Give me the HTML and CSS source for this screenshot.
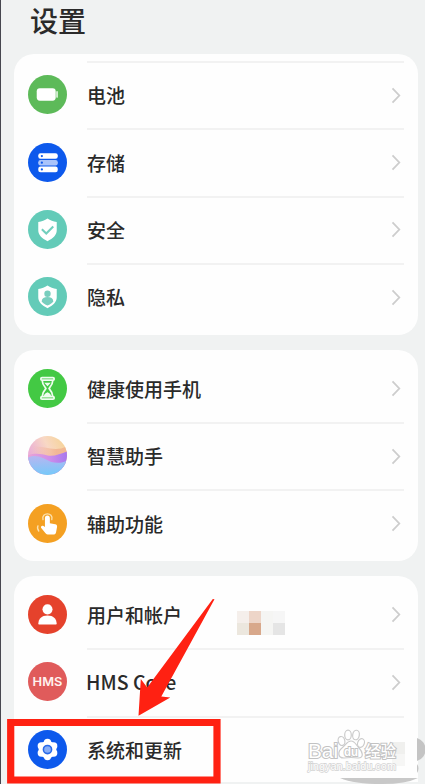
FILE: index.html
```html
<!DOCTYPE html>
<html lang="zh-CN">
<head>
<meta charset="utf-8">
<title>设置</title>
<link rel="stylesheet" href="styles.css">
</head>
<body>
<main class="screen">
  <h1 class="title">设置</h1>

  <section class="card card-first">
    <div class="row">
      <svg class="icon" viewBox="0 0 38 38"><circle cx="19" cy="19" r="19" fill="#5dba59"/><rect x="8.5" y="13" width="18.5" height="12" rx="3" fill="#fff"/><path d="M28.3 16.5v5" stroke="#e3f5e2" stroke-width="1.6" stroke-linecap="round"/></svg>
      <div class="body"><span class="label">电池</span><svg class="chevron" viewBox="0 0 10 17"><path d="M1.5 1.3 8.3 8.5 1.5 15.7"/></svg></div>
    </div>
    <div class="row">
      <svg class="icon" viewBox="0 0 38 38"><circle cx="19" cy="19" r="19" fill="#0d59ec"/><rect x="10" y="10" width="19" height="5.4" rx="2.2" fill="#fff"/><rect x="10" y="16.5" width="19" height="5.4" rx="2.2" fill="#a9c3fa"/><rect x="10" y="23" width="19" height="5.4" rx="2.2" fill="#fff"/><g fill="#0d59ec"><circle cx="13.5" cy="12.7" r="1.1"/><circle cx="13.5" cy="19.2" r="1.1"/><circle cx="13.5" cy="25.7" r="1.1"/></g></svg>
      <div class="body"><span class="label">存储</span><svg class="chevron" viewBox="0 0 10 17"><path d="M1.5 1.3 8.3 8.5 1.5 15.7"/></svg></div>
    </div>
    <div class="row">
      <svg class="icon" viewBox="0 0 38 38"><circle cx="19" cy="19" r="19" fill="#63cbb8"/><path d="M19 8.2c2.8 2 5.4 3 9 3.4v8.2c0 4.7-3.5 8-9 10.600-5.500-2.600-9-5.900-9-10.600v-8.200c3.600-.4 6.200-1.400 9-3.400z" fill="#fff"/><path d="m13.500 18.700 4.300 4.200 6.800-6.900" fill="none" stroke="#72cfbd" stroke-width="2"/></svg>
      <div class="body"><span class="label">安全</span><svg class="chevron" viewBox="0 0 10 17"><path d="M1.500 1.300 8.300 8.500 1.500 15.700"/></svg></div>
    </div>
    <div class="row">
      <svg class="icon" viewBox="0 0 38 38"><circle cx="19" cy="19" r="19" fill="#63cbb8"/><path d="M19 8.200c2.800 2 5.400 3 9 3.400v8.200c0 4.700-3.500 8-9 10.600-5.500-2.600-9-5.900-9-10.600v-8.200c3.600-.4 6.200-1.400 9-3.400z" fill="#fff"/><circle cx="19" cy="16.300" r="3.100" fill="#78cebe"/><path d="M13.300 23.800c.3-3 2.400-4.200 5.700-4.200s5.400 1.200 5.700 4.200c-1.400 1.600-3.200 2.800-5.700 4-2.500-1.200-4.300-2.400-5.700-4z" fill="#78cebe"/></svg>
      <div class="body"><span class="label">隐私</span><svg class="chevron" viewBox="0 0 10 17"><path d="M1.500 1.300 8.300 8.500 1.500 15.700"/></svg></div>
    </div>
  </section>

  <section class="card">
    <div class="row">
      <svg class="icon" viewBox="0 0 38 38"><circle cx="19" cy="19" r="19" fill="#43c944"/><g fill="none" stroke="#effcef" stroke-width="1.700" stroke-linejoin="round"><rect x="12.500" y="8.500" width="13" height="2.400" rx="1.200"/><rect x="12.500" y="27" width="13" height="2.400" rx="1.200"/><path d="M13.800 11c0 4 1.500 5.500 3.700 8-2.200 2.500-3.700 4-3.700 8M24.200 11c0 4-1.500 5.500-3.700 8 2.200 2.500 3.700 4 3.700 8"/></g><path d="M15.800 13.500h6.400L19 16.800zM15.500 26.500c.3-2 1.500-3 3.500-3.800 2 .8 3.200 1.800 3.500 3.800z" fill="#effcef"/></svg>
      <div class="body"><span class="label">健康使用手机</span><svg class="chevron" viewBox="0 0 10 17"><path d="M1.500 1.300 8.300 8.500 1.500 15.700"/></svg></div>
    </div>
    <div class="row">
      <svg class="icon" viewBox="0 0 38 38">
        <defs>
          <clipPath id="orb"><circle cx="19" cy="19" r="19"/></clipPath>
          <linearGradient id="sky" x1="0" y1=".5" x2="1" y2="0"><stop offset="0" stop-color="#e9aad8"/><stop offset=".5" stop-color="#f8d8c4"/><stop offset="1" stop-color="#f5d28c"/></linearGradient>
          <linearGradient id="glow" x1="0" x2="1"><stop offset="0" stop-color="#f1b69b" stop-opacity="0"/><stop offset=".7" stop-color="#f1b08e" stop-opacity=".8"/></linearGradient>
          <linearGradient id="violet" x1="0" x2="1"><stop offset="0" stop-color="#eba3d4"/><stop offset=".55" stop-color="#ce8eea"/><stop offset="1" stop-color="#a878ed"/></linearGradient>
          <linearGradient id="sea" x1=".3" y1="0" x2=".4" y2="1"><stop offset="0" stop-color="#b7b6f1"/><stop offset="1" stop-color="#76c9f9"/></linearGradient>
        </defs>
        <g clip-path="url(#orb)"><path fill="url(#sky)" d="M0 0h38v38H0z"/><path d="M4 10c14 0 22 6 34 0v12H4z" fill="url(#glow)"/><path d="M0 19c8-3 13-1 19 0 7 1 13-2 19-4v22H0z" fill="url(#violet)"/><path d="M0 21c9-4 15 1 22 4 6 2 12 1 16-1v14H0z" fill="url(#sea)"/></g>
      </svg>
      <div class="body"><span class="label">智慧助手</span><svg class="chevron" viewBox="0 0 10 17"><path d="M1.500 1.300 8.300 8.500 1.500 15.700"/></svg></div>
    </div>
    <div class="row">
      <svg class="icon" viewBox="0 0 38 38"><circle cx="19" cy="19" r="19" fill="#f4a022"/><path d="M16.500 13.700c0-3.200 4.800-3.200 4.800 0v5.100l5.200 1c1.500.3 2.100 1.200 1.800 2.700l-.9 4.700c-.3 1.700-1.200 2.600-3 2.600h-4.200c-1.500 0-2.400-.5-3.300-1.600l-3.800-4.500c-1.300-1.600.5-3.300 2-2.200l1.400 1z" fill="#fff"/><path d="M14.600 15.200c-1.800-7.400 10.400-7.400 8.600 0M9.700 21.300c-.8 1.900-.5 3.500.8 5" fill="none" stroke="#fce1ae" stroke-width="1.300" stroke-linecap="round"/></svg>
      <div class="body"><span class="label">辅助功能</span><svg class="chevron" viewBox="0 0 10 17"><path d="M1.500 1.300 8.300 8.500 1.500 15.700"/></svg></div>
    </div>
  </section>

  <section class="card card-last">
    <div class="row">
      <svg class="icon" viewBox="0 0 38 38"><circle cx="19" cy="19" r="19" fill="#e5422c"/><circle cx="19" cy="14" r="4.900" fill="#fff"/><path d="M10 28c.4-5 3.300-8 9-8s8.600 3 9 8q0 .8-.8.800H10.800q-.8 0-.8-.8z" fill="#fff"/></svg>
      <div class="body"><span class="label">用户和帐户</span>
        <div class="mosaic"><i class="m1"></i><i class="m2"></i><i class="m3"></i><i class="m4"></i><i class="m5"></i><i class="m6"></i><i class="m3"></i><i class="m7"></i></div>
        <svg class="chevron" viewBox="0 0 10 17"><path d="M1.500 1.300 8.300 8.500 1.500 15.700"/></svg></div>
    </div>
    <div class="row">
      <svg class="icon" viewBox="0 0 38 38"><circle cx="19" cy="19" r="19" fill="#e05b5b"/><text class="hms" x="19" y="23.200" text-anchor="middle" textLength="29" lengthAdjust="spacingAndGlyphs">HMS</text></svg>
      <div class="body"><span class="label label-latin">HMS Core</span><svg class="chevron" viewBox="0 0 10 17"><path d="M1.500 1.300 8.300 8.500 1.500 15.700"/></svg></div>
    </div>
    <div class="row">
      <svg class="icon" viewBox="0 0 38 38"><circle cx="19" cy="19" r="19" fill="#0d59ec"/><g fill="#fff"><circle cx="19" cy="19" r="8.600"/><circle cx="19" cy="12.200" r="3.600"/><circle cx="25" cy="15.600" r="3.600"/><circle cx="25" cy="22.400" r="3.600"/><circle cx="19" cy="25.800" r="3.600"/><circle cx="13" cy="22.400" r="3.600"/><circle cx="13" cy="15.600" r="3.600"/></g><circle cx="19" cy="19" r="4" fill="#86adf7" stroke="#2869e9" stroke-width="1.500"/></svg>
      <div class="body"><span class="label">系统和更新</span></div>
    </div>
  </section>

  <svg class="overlay" viewBox="0 0 425 784">
    <path d="M417 738a12 12 0 0 1 0 23zM417 764q3 4 0 9z" fill="#c4c4c4"/>
    <path d="M340 778h78q-12 6-36 6-28 0-42-6z" fill="#c8c8c8"/>
    <path d="M392 742h13v12h-13z" fill="#f0f0ee"/><path d="M392 754h13v12h-13z" fill="#f6f6f5"/>
    <g fill="#fff" stroke="#cbcbcb" stroke-width="1.200">
      <ellipse cx="341.500" cy="741" rx="3.300" ry="4.500" transform="rotate(-15 341.500 741)"/><ellipse cx="348" cy="735" rx="3.300" ry="4.800"/><ellipse cx="356" cy="735" rx="3.300" ry="4.800" transform="rotate(10 356 735)"/><ellipse cx="361" cy="743" rx="3.300" ry="4.500" transform="rotate(20 361 743)"/>
      <path d="M351 741c4 0 5 4 8 7s6 10-1 10q-7-1-14 0c-7 0-6-7-2-10s5-7 9-7z"/>
    </g>
    <g class="watermark">
      <text class="wm-name" x="308" y="758" textLength="30" lengthAdjust="spacingAndGlyphs">Bai</text><text class="wm-du" x="344" y="755.500" textLength="14" lengthAdjust="spacingAndGlyphs">du</text><text class="wm-cn" x="365" y="757" textLength="31" lengthAdjust="spacingAndGlyphs">经验</text>
      <text class="wm-url" x="308" y="770" textLength="88" lengthAdjust="spacingAndGlyphs">jingyan.baidu.com</text>
    </g>
    <path d="M214.500 599.300 161.300 696.500 170.300 697.600 138.500 715.800 140.800 679 147.200 687.600 212.800 599z" fill="#ff2112"/>
    <path d="M10.700 722.500H217V780H10.700z" fill="none" stroke="#ff2112" stroke-width="7.200"/>
  </svg>
</main>
</body>
</html>
```
FILE: styles.css
```css
* {
  box-sizing: border-box;
}

body {
  margin: 0;
  background: #f0f2f2;
  font-family: "Noto Sans CJK SC", sans-serif;
  color: #2a2a2a;
}

.screen {
  position: relative;
  height: 784px;
  overflow: hidden;
  padding: 0 7px 0 13px;
  border-left: 1px solid #47474f;
}

.title {
  height: 54px;
  margin: 0;
  padding-left: 16px;
  font-size: 28px;
  font-weight: 500;
  line-height: 40px;
}

.card {
  margin-bottom: 15px;
  padding: 5px 14px 4px;
  border-radius: 20px;
  background: #fefefe;
}

.card-first {
  padding-top: 7px;
}

.card-last {
  height: 206px;
  border-bottom-left-radius: 0;
  border-bottom-right-radius: 0;
}

.row {
  display: flex;
  align-items: center;
  gap: 20px;
  height: 67.4px;
}

.icon {
  flex: none;
  width: 39px;
  height: 39px;
}

.body {
  position: relative;
  display: flex;
  flex: 1;
  align-items: center;
  justify-content: space-between;
  height: 100%;
  padding: 0 3px 1px 0;
  border-top: 2px solid #f2f2f2;
}

.card:not(.card-first) .row:first-child .body {
  border-top-color: transparent;
}

.label {
  font-size: 19px;
  font-weight: 500;
  line-height: 28px;
  white-space: nowrap;
}

.label-latin {
  margin-left: -1px;
  font-size: 19.5px;
}

.chevron {
  width: 10px;
  height: 17px;
  fill: none;
  stroke: #cdcdcd;
  stroke-width: 1.8;
}

.mosaic {
  position: absolute;
  left: 150px;
  top: 28px;
  display: grid;
  grid-template-columns: repeat(4, 12px);
  grid-auto-rows: 12px;
}

.m1 { background: #f5efeb; }
.m2 { background: #edd5c8; }
.m3 { background: #f5f5f3; }
.m4 { background: #f6f6f6; }
.m5 { background: #ece7de; }
.m6 { background: #d8a88b; }
.m7 { background: #e5e5e5; }

.hms {
  fill: #fff2f0;
  font: 600 11.5px Inter, sans-serif;
}

.overlay {
  position: absolute;
  left: -1px;
  top: 0;
  width: 425px;
  height: 784px;
}

.watermark {
  fill: #fff;
  stroke: #c2c2c2;
  stroke-width: 2;
  paint-order: stroke;
  font-family: "Liberation Sans", "Noto Sans CJK SC", sans-serif;
}

.wm-name {
  font-size: 20px;
}

.wm-du {
  font-size: 13px;
  font-weight: 700;
}

.wm-cn {
  font-size: 16px;
  font-weight: 500;
}

.wm-url {
  font-size: 11px;
  stroke: #d2d2d2;
  stroke-width: 1.4;
}
```
